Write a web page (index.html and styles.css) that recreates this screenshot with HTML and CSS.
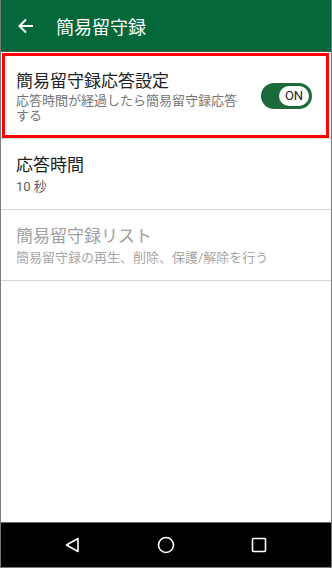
FILE: index.html
```html
<!DOCTYPE html>
<html lang="ja">
<head>
<meta charset="utf-8">
<link rel="stylesheet" href="styles.css">
</head>
<body>
<div class="screen">
  <header class="appbar">
    <svg class="back" width="18" height="18" viewBox="0 0 18 18"><path d="M16 9H3M9 2.5L2.5 9L9 15.5" fill="none" stroke="#fff" stroke-width="2"/></svg>
    <span class="apptitle">簡易留守録</span>
  </header>
  <main class="content">
    <div class="highlight">
      <div class="row row-toggle">
        <div class="texts">
          <div class="title">簡易留守録応答設定</div>
          <div class="sub">応答時間が経過したら簡易留守録応答する</div>
        </div>
        <div class="switch"><span class="knob">ON</span></div>
      </div>
    </div>
    <div class="row row-plain">
      <div class="title">応答時間</div>
      <div class="sub">10 秒</div>
    </div>
    <div class="row row-plain disabled">
      <div class="title">簡易留守録リスト</div>
      <div class="sub">簡易留守録の再生、削除、保護/解除を行う</div>
    </div>
  </main>
  <nav class="navbar">
    <svg width="20" height="20" viewBox="0 0 20 20"><path d="M15 3.5V16.5L3.5 10Z" fill="none" stroke="#fff" stroke-width="1.6" stroke-linejoin="round"/></svg>
    <svg width="20" height="20" viewBox="0 0 20 20"><circle cx="10" cy="10" r="7.5" fill="none" stroke="#fff" stroke-width="1.6"/></svg>
    <svg width="20" height="20" viewBox="0 0 20 20"><rect x="3.5" y="3.5" width="13" height="13" rx="1" fill="none" stroke="#fff" stroke-width="1.6"/></svg>
  </nav>
</div>
</body>
</html>
```
FILE: styles.css
```css
* { box-sizing: border-box; }
html, body { margin: 0; padding: 0; }
body {
  font-family: Roboto, "Noto Sans CJK JP", sans-serif;
  background: #fff;
}
.screen {
  width: 332px;
  height: 568px;
  display: flex;
  flex-direction: column;
  border-left: 1px solid #7a7a7a;
  border-right: 1px solid #7a7a7a;
  border-bottom: 1px solid #7a7a7a;
}
.appbar {
  height: 52px;
  flex: none;
  background: #04673a;
  border-bottom: 1px solid #3f5f4c;
  display: flex;
  align-items: center;
  padding-left: 16px;
}
.back { flex: none; }
.apptitle {
  color: #fff;
  font-size: 18px;
  margin-left: 21px;
}
.content {
  flex: 1;
  display: flex;
  flex-direction: column;
}
.highlight {
  margin: 1px 2px 0 1px;
  border: 3px solid #ff0000;
  height: 85px;
}
.row-toggle {
  height: 100%;
  display: flex;
  align-items: center;
  padding: 2px 14px 0 11px;
}
.texts { width: 225px; }
.title {
  font-size: 17px;
  line-height: 22px;
  color: #212121;
}
.sub {
  font-size: 13px;
  line-height: 15px;
  color: #757575;
}
.row-toggle .sub { margin-top: 1px; }
.switch {
  margin-left: auto;
  margin-top: -2px;
  width: 51px;
  height: 26px;
  border-radius: 13px;
  background: #1a6a3b;
  display: flex;
  align-items: center;
  justify-content: flex-end;
  padding-right: 3px;
}
.knob {
  width: 30px;
  height: 20px;
  border-radius: 10px;
  background: #fff;
  font-size: 13px;
  color: #222;
  display: flex;
  align-items: center;
  justify-content: center;
  font-family: Roboto, sans-serif;
}
.row-plain {
  border-top: 1px solid #d6d6d6;
  height: 71px;
  padding: 15px 15px 0 15px;
}
.row-plain .sub { margin-top: 3px; color: #616161; }
.row-plain + .row-plain { border-bottom: 1px solid #d6d6d6; height: 72px; }
.disabled .title { color: #a0a0a0; }
.disabled .sub { color: #a6a6a6; }
.navbar {
  height: 45px;
  flex: none;
  background: #000;
  border-top: 1px solid #6a6a6a;
  display: flex;
  align-items: center;
  justify-content: space-between;
  padding: 0 62px;
}
```
